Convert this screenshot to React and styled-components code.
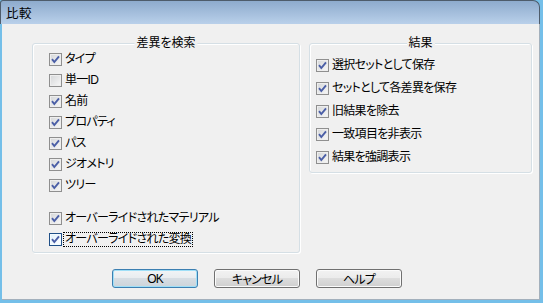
import styled, { createGlobalStyle } from "styled-components";

const GlobalStyle = createGlobalStyle`
  html, body {
    margin: 0;
    padding: 0;
    width: 543px;
    height: 303px;
    overflow: hidden;
    background: #74bfe9;
  }

  body {
    font-family: "Liberation Sans", "Noto Sans CJK JP", sans-serif;
    font-size: 12px;
    font-feature-settings: "palt";
    color: #000;
  }
`;

const Window = styled.div`
  width: 543px;
  height: 303px;
  display: flex;
  flex-direction: column;
  box-sizing: border-box;
`;

const TitleBar = styled.div`
  flex: none;
  height: 24px;
  box-sizing: border-box;
  margin-right: 3px;
  border: 1px solid #4e5c6b;
  border-bottom: none;
  border-radius: 3px 7px 0 0;
  background: linear-gradient(#8eabcd, #b9d0ea);
  display: flex;
  align-items: center;
  padding-left: 5px;
  font-size: 12.5px;
  letter-spacing: 0.5px;
`;

const Body = styled.div`
  flex: 1;
  margin: 0 3px 3px 2px;
  background: #f0f0f0;
  box-shadow: inset -1px -1px 0 #a3b0bc;
  display: flex;
  flex-direction: column;
  padding: 19px 0 0 30px;
`;

const Panels = styled.div`
  display: flex;
  align-items: flex-start;
  gap: 9px;
`;

const Group = styled.div`
  position: relative;
  box-sizing: border-box;
  width: ${({ $w }) => $w}px;
  height: ${({ $h }) => $h}px;
  border: 1px solid #d5dfe5;
  border-radius: 3px;
  box-shadow: inset 1px 1px 0 #fff, 1px 1px 0 #fff;
  padding: ${({ $pad }) => $pad};
`;

const Legend = styled.div`
  position: absolute;
  top: -8px;
  left: 50%;
  transform: translateX(-50%);
  padding: 0 2px;
  background: #f0f0f0;
  line-height: 14px;
  white-space: nowrap;
`;

const List = styled.div`
  display: flex;
  flex-direction: column;
`;

const Row = styled.div`
  display: flex;
  align-items: center;
  gap: 2px;
  height: ${({ $h }) => $h}px;
  white-space: nowrap;
`;

const Spacer = styled.div`
  height: 12px;
`;

const Box = styled.span`
  flex: none;
  width: 13px;
  height: 13px;
  box-sizing: border-box;
  border: 1px solid ${({ $hot }) => ($hot ? "#1f4f87" : "#8f8f8f")};
  background: ${({ $hot }) =>
    $hot
      ? "linear-gradient(135deg, #dff1fb, #ffffff)"
      : "linear-gradient(135deg, #d4d6d8, #f8f8f8)"};
  box-shadow: inset 0 0 0 1px ${({ $hot }) => ($hot ? "#f4fbff" : "#eeeeee")};
  display: flex;
  align-items: center;
  justify-content: center;
`;

const Label = styled.span`
  padding: 0 1px;
  line-height: 13px;
  letter-spacing: -0.7px;
  outline: ${({ $focus }) => ($focus ? "1px dotted #000" : "none")};
`;

const ButtonRow = styled.div`
  display: flex;
  gap: 16px;
  margin-top: 16px;
  padding-left: 80px;
`;

const Button = styled.button`
  width: 86px;
  height: 19px;
  box-sizing: border-box;
  padding: 0;
  font: inherit;
  font-feature-settings: "palt";
  letter-spacing: -0.8px;
  color: #000;
  border-radius: 3px;
  border: 1px solid ${({ $default }) => ($default ? "#3c7fb1" : "#707070")};
  box-shadow: inset 0 0 0 1px
    ${({ $default }) => ($default ? "#9fdff7" : "#fbfbfb")};
  background: ${({ $default }) =>
    $default
      ? "linear-gradient(#f1f4f6 0%, #e8ecef 50%, #d6dde3 50%, #cdd4da 100%)"
      : "linear-gradient(#f2f2f2 0%, #ebebeb 50%, #dddddd 50%, #cfcfcf 100%)"};
`;

function Check({ checked, hot }) {
  return (
    <Box $hot={hot}>
      {checked && (
        <svg width="11" height="11" viewBox="0 0 11 11">
          <path
            d="M2 5.2 L4.3 8 L9 2.3"
            fill="none"
            stroke="#4a5ea6"
            strokeWidth="1.9"
          />
        </svg>
      )}
    </Box>
  );
}

const searchItems = [
  { label: "タイプ", checked: true },
  { label: "単一ID", checked: false },
  { label: "名前", checked: true },
  { label: "プロパティ", checked: true },
  { label: "パス", checked: true },
  { label: "ジオメトリ", checked: true },
  { label: "ツリー", checked: true },
];

const overrideItems = [
  { label: "オーバーライドされたマテリアル", checked: true },
  { label: "オーバーライドされた変換", checked: true, focus: true },
];

const resultItems = [
  "選択セットとして保存",
  "セットとして各差異を保存",
  "旧結果を除去",
  "一致項目を非表示",
  "結果を強調表示",
];

export default function App() {
  return (
    <>
      <GlobalStyle />
      <Window>
        <TitleBar>比較</TitleBar>
        <Body>
          <Panels>
            <Group $w={268} $h={210} $pad="5px 0 0 16px">
              <Legend>差異を検索</Legend>
              <List>
                {searchItems.map((item) => (
                  <Row key={item.label} $h={21}>
                    <Check checked={item.checked} />
                    <Label>{item.label}</Label>
                  </Row>
                ))}
                <Spacer />
                {overrideItems.map((item) => (
                  <Row key={item.label} $h={21}>
                    <Check checked={item.checked} hot={item.focus} />
                    <Label $focus={item.focus}>{item.label}</Label>
                  </Row>
                ))}
              </List>
            </Group>
            <Group $w={223} $h={130} $pad="10px 0 0 6px">
              <Legend>結果</Legend>
              <List>
                {resultItems.map((label) => (
                  <Row key={label} $h={23}>
                    <Check checked />
                    <Label>{label}</Label>
                  </Row>
                ))}
              </List>
            </Group>
          </Panels>
          <ButtonRow>
            <Button $default>OK</Button>
            <Button>キャンセル</Button>
            <Button>ヘルプ</Button>
          </ButtonRow>
        </Body>
      </Window>
    </>
  );
}
